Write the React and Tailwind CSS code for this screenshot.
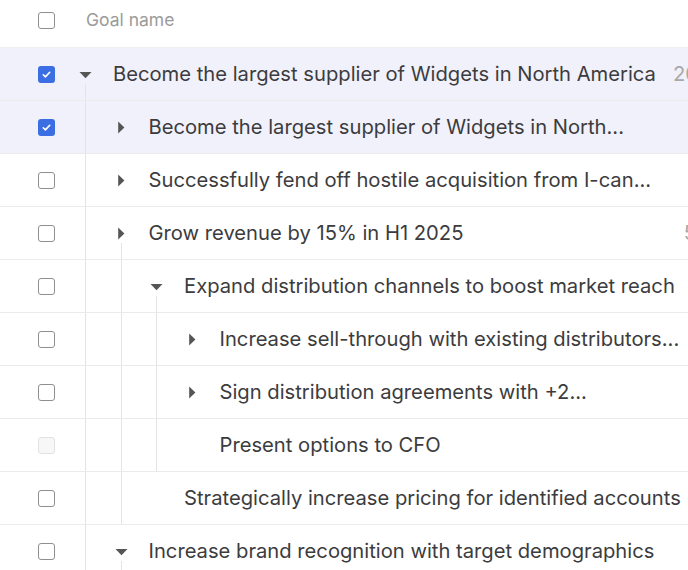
import React from "react";

const rows = [
  { d: 0, caret: "down", checked: true, sel: true, text: "Become the largest supplier of Widgets in North America", guides: [], extra: "2025" },
  { d: 1, caret: "right", checked: true, sel: true, text: "Become the largest supplier of Widgets in North...", guides: [true] },
  { d: 1, caret: "right", text: "Successfully fend off hostile acquisition from I-can...", guides: [true] },
  { d: 1, caret: "right", line: true, text: "Grow revenue by 15% in H1 2025", guides: [true], extra2: "5" },
  { d: 2, caret: "down", text: "Expand distribution channels to boost market reach", guides: [true, true] },
  { d: 3, caret: "right", text: "Increase sell-through with existing distributors...", guides: [true, true, true] },
  { d: 3, caret: "right", text: "Sign distribution agreements with +2...", guides: [true, true, true] },
  { d: 3, caret: null, disabled: true, text: "Present options to CFO", guides: [true, true, true] },
  { d: 2, caret: null, text: "Strategically increase pricing for identified accounts", guides: [true, true] },
  { d: 1, caret: "down", text: "Increase brand recognition with target demographics", guides: [true] },
];

function Checkbox({ checked, disabled }) {
  if (checked) {
    return (
      <div className="w-[17px] h-[17px] rounded-[3px] bg-[#3b6de3] flex items-center justify-center">
        <svg width="11" height="11" viewBox="0 0 12 12" fill="none">
          <path d="M2.5 6.3l2.3 2.3 4.7-5" stroke="white" strokeWidth="1.8" strokeLinecap="round" strokeLinejoin="round" />
        </svg>
      </div>
    );
  }
  return (
    <div
      className={
        disabled
          ? "w-[17px] h-[17px] rounded-[3px] border-[1.5px] border-[#e2e2e2] bg-[#f7f7f7]"
          : "w-[17px] h-[17px] rounded-[3px] border-[1.5px] border-[#8f8f8f] bg-white"
      }
    />
  );
}

function Caret({ dir }) {
  if (dir === "down") {
    return (
      <svg width="13" height="8" viewBox="0 0 13 8">
        <path d="M0.5 1h12L6.5 7.2z" fill="#555" />
      </svg>
    );
  }
  return (
    <svg width="8" height="13" viewBox="0 0 8 13">
      <path d="M1.2 0.5v12L7.4 6.5z" fill="#555" />
    </svg>
  );
}

function Row({ r }) {
  const hasLineBelow = r.caret === "down" || r.line;
  return (
    <div
      className={
        "flex h-[53px] border-b border-[#ebebeb] " + (r.sel ? "bg-[#f1f1fb]" : "bg-white")
      }
    >
      <div className="w-[68px] shrink-0 flex items-center pl-[38px]">
        <Checkbox checked={r.checked} disabled={r.disabled} />
      </div>
      {r.guides.map((g, i) => (
        <div key={i} className="w-[35.5px] shrink-0 flex justify-center">
          {g && <div className="w-px h-full bg-[#e4e4e4]" />}
        </div>
      ))}
      <div className="w-[35.5px] shrink-0 flex flex-col items-center">
        <div className="h-[20px] shrink-0" />
        <div className="h-[13px] shrink-0 flex items-center justify-center">
          {r.caret && <Caret dir={r.caret} />}
        </div>
        {hasLineBelow && (
          <>
            <div className="h-[3px] shrink-0" />
            <div className="w-px flex-1 bg-[#e4e4e4]" />
          </>
        )}
      </div>
      <div className="flex items-center pl-[9.5px] whitespace-nowrap text-[20.2px] text-[#3c3c3e]">
        {r.text}
      </div>
      {r.extra && (
        <div className="flex items-center pl-[17px] whitespace-nowrap text-[20.2px] text-[#a8a8a8]">
          {r.extra}
        </div>
      )}
      {r.extra2 && (
        <div className="flex-1 flex items-center justify-end whitespace-nowrap text-[20.2px] text-[#a8a8a8]">
          <span className="translate-x-[8px]">{r.extra2}</span>
        </div>
      )}
    </div>
  );
}

export default function App() {
  return (
    <div
      className="w-[688px] h-[570px] overflow-hidden bg-white"
      style={{ fontFamily: "Inter, 'Noto Sans', sans-serif" }}
    >
      <div className="w-[688px]">
        <div className="flex h-[48px] pb-[6px] border-b border-[#f0f0f0] bg-white">
          <div className="w-[68px] shrink-0 flex items-center pl-[38px]">
            <Checkbox />
          </div>
          <div className="flex items-center pl-[18px] text-[17.5px] text-[#9b9b9b]">Goal name</div>
        </div>
        {rows.map((r, i) => (
          <Row key={i} r={r} />
        ))}
      </div>
    </div>
  );
}
